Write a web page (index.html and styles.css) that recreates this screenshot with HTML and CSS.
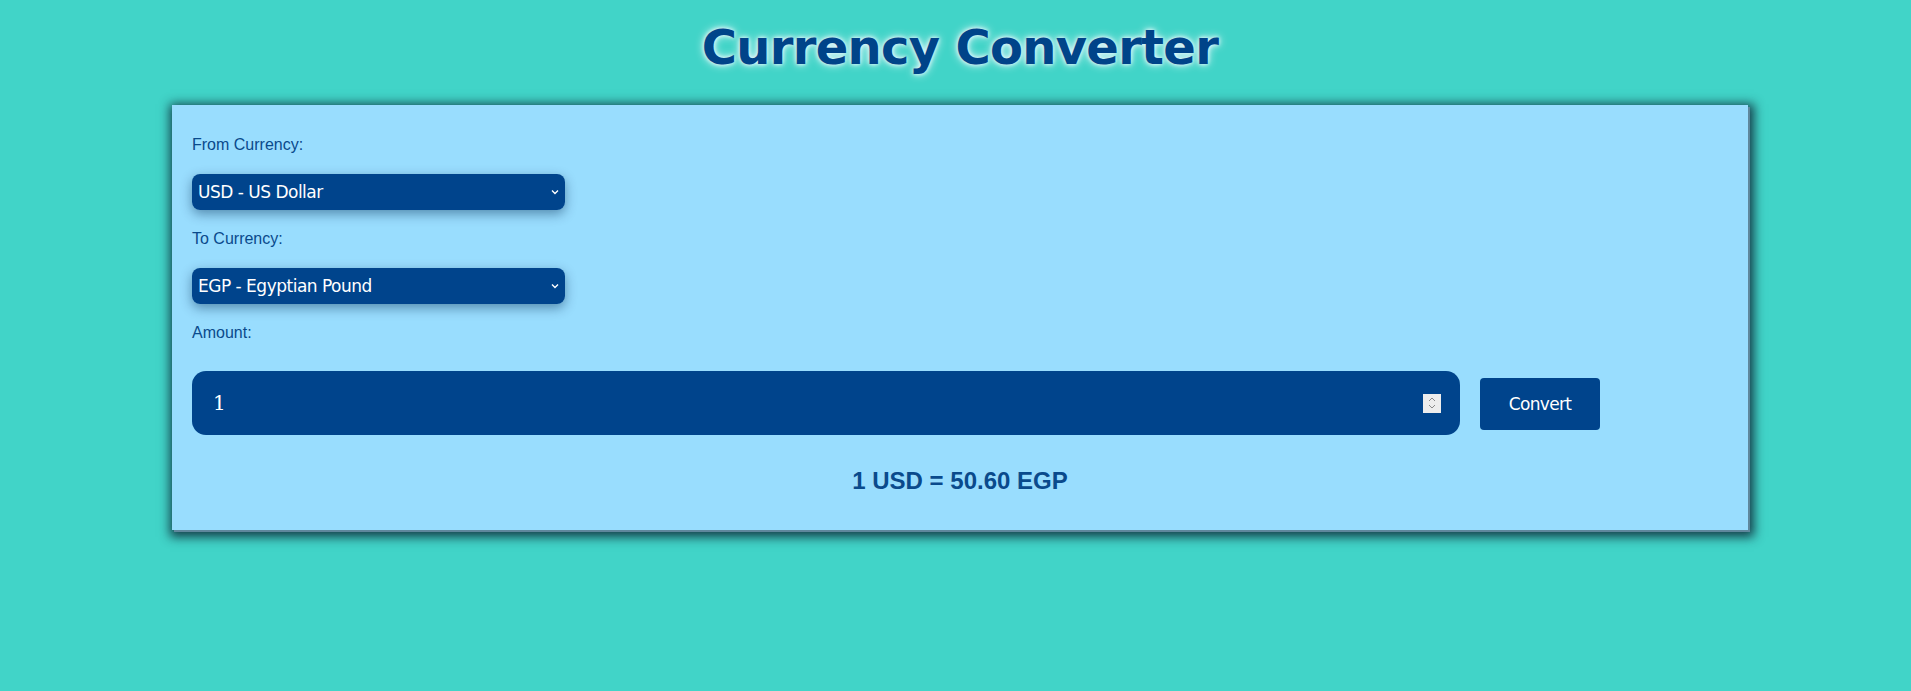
FILE: index.html
```html
<!DOCTYPE html>
<html lang="en">
<head>
<meta charset="utf-8">
<title>Currency Converter</title>
<link rel="stylesheet" href="styles.css">
</head>
<body>
<h1 class="title">Currency Converter</h1>
<div class="card">
  <label class="label" for="from">From Currency:</label>
  <div class="select-wrap">
    <select id="from" class="select">
      <option>USD - US Dollar</option>
    </select>
    <svg class="chev" width="8" height="6" viewBox="0 0 8 6"><path d="M1 1.5 L4 4.5 L7 1.5" fill="none" stroke="#fff" stroke-width="1.4"/></svg>
  </div>
  <label class="label" for="to">To Currency:</label>
  <div class="select-wrap">
    <select id="to" class="select">
      <option>EGP - Egyptian Pound</option>
    </select>
    <svg class="chev" width="8" height="6" viewBox="0 0 8 6"><path d="M1 1.5 L4 4.5 L7 1.5" fill="none" stroke="#fff" stroke-width="1.4"/></svg>
  </div>
  <label class="label" for="amount">Amount:</label>
  <div class="amount-row">
    <div class="amount">
      <span class="amount-val">1</span>
      <span class="spin">
        <svg width="10" height="14" viewBox="0 0 10 14"><path d="M2 5 L5 2 L8 5 M2 9 L5 12 L8 9" fill="none" stroke="#8a8a8a" stroke-width="1"/></svg>
      </span>
    </div>
    <button class="btn">Convert</button>
  </div>
  <p class="result">1 USD = 50.60 EGP</p>
</div>
</body>
</html>
```
FILE: styles.css
```css
html, body {
  background: #41d4c8;
}
body {
  margin: 0;
  padding: 14px 0 40px 9px;
  font-family: "Liberation Sans", Arial, sans-serif;
}
.title {
  margin: 0 0 25px;
  text-align: center;
  font-family: "DejaVu Sans", Verdana, sans-serif;
  font-weight: bold;
  font-size: 48px;
  line-height: 66px;
  color: #004489;
  text-shadow: 0 0 10px #e8f8ff, 0 0 4px #ffffff;
  letter-spacing: -0.7px;
}
.card {
  width: 1576px;
  box-sizing: border-box;
  margin: 0 auto;
  background: #99ddfe;
  padding: 31px 20px 36px;
  display: flex;
  flex-direction: column;
  align-items: flex-start;
  box-shadow: 2px 2px 0 #5f879c, 2px 3px 10px 4px rgba(15, 45, 60, 0.9);
}
.label {
  font-size: 16px;
  line-height: 18px;
  color: #0a4a8c;
  margin-bottom: 20px;
}
.select-wrap {
  position: relative;
  width: 373px;
  height: 36px;
  margin-bottom: 20px;
  border-radius: 8px;
  box-shadow: 0 4px 12px rgba(0, 40, 80, 0.45);
}
.select {
  appearance: none;
  -webkit-appearance: none;
  width: 100%;
  height: 100%;
  border: none;
  border-radius: 8px;
  background: #00448c;
  color: #fff;
  font-family: "DejaVu Sans", Tahoma, sans-serif;
  font-size: 17px;
  letter-spacing: -0.5px;
  padding: 0 6px;
  outline: none;
}
.chev {
  position: absolute;
  right: 6px;
  top: 15px;
}
.amount-row {
  margin-top: 9px;
  display: flex;
  align-items: center;
  gap: 20px;
  width: 100%;
}
.amount {
  width: 1268px;
  height: 64px;
  box-sizing: border-box;
  border-radius: 14px;
  background: #00448c;
  display: flex;
  align-items: center;
  justify-content: space-between;
  padding: 0 19px 0 21px;
}
.amount-val {
  color: #fff;
  font-family: "DejaVu Serif", Georgia, serif;
  font-size: 20px;
}
.spin {
  width: 18px;
  height: 19px;
  background: #ededed;
  display: flex;
  align-items: center;
  justify-content: center;
}
.btn {
  width: 120px;
  height: 52px;
  margin-top: 2px;
  border: none;
  border-radius: 4px;
  background: #00448c;
  color: #fff;
  font-family: "DejaVu Sans", Tahoma, sans-serif;
  font-size: 17px;
  letter-spacing: -0.7px;
}
.result {
  align-self: stretch;
  text-align: center;
  margin: 32px 0 0;
  font-size: 24px;
  line-height: 27px;
  font-weight: bold;
  color: #0a4a8c;
}
```
